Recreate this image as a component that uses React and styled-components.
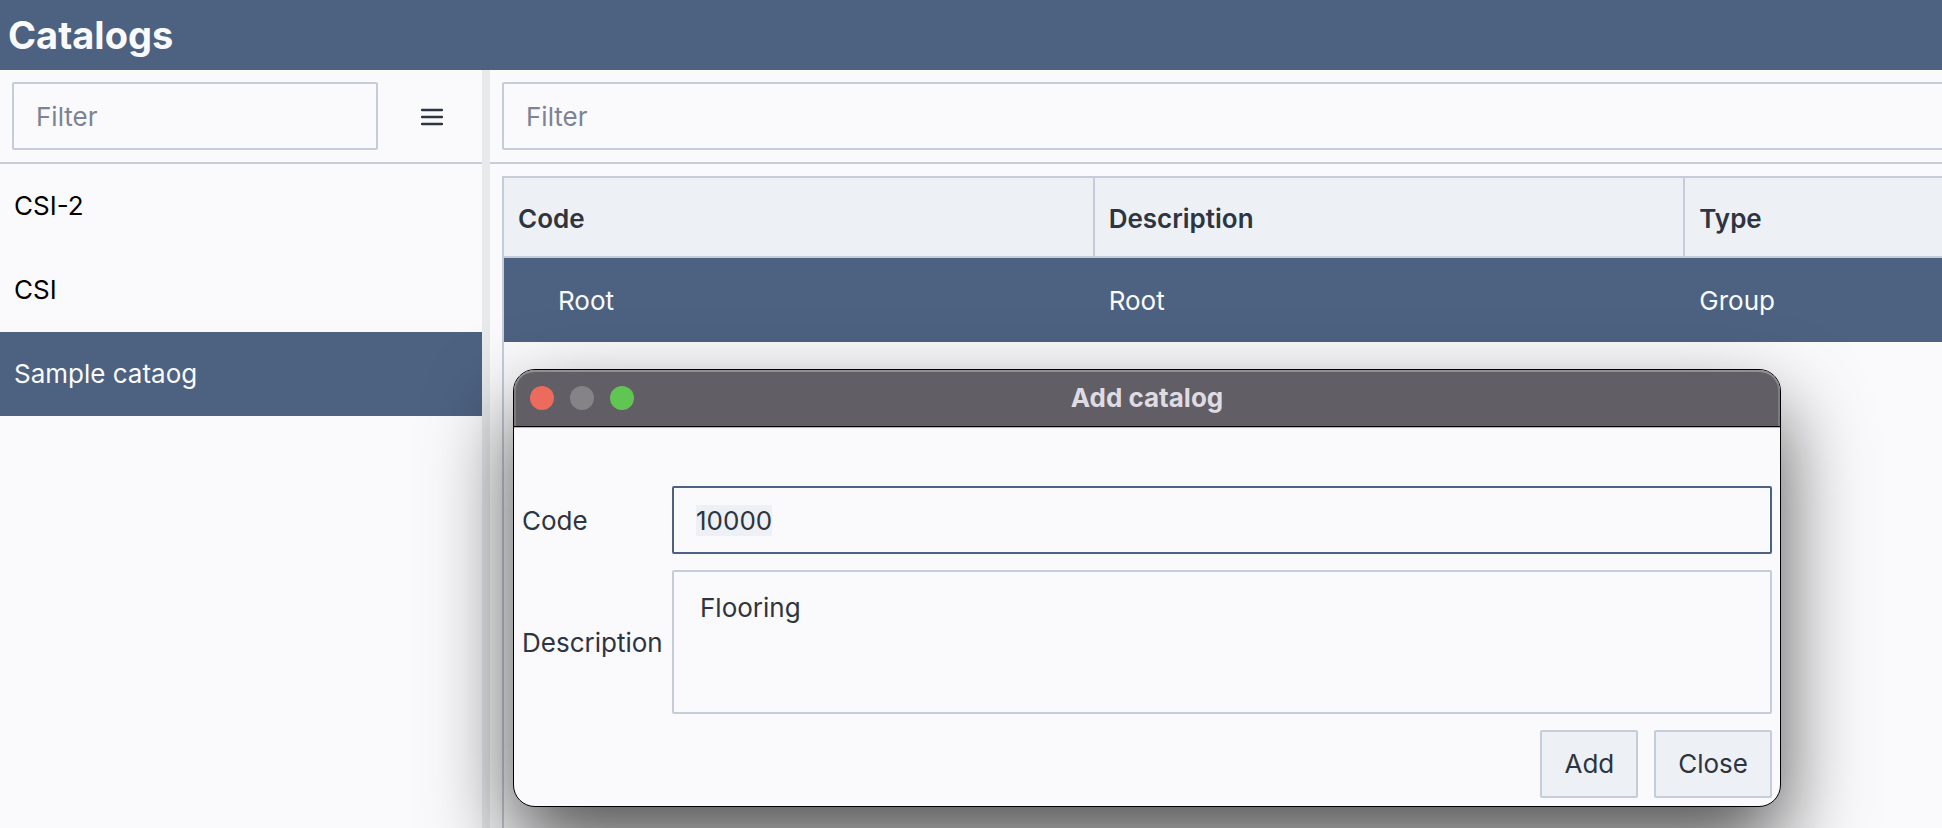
import { useEffect, useRef, useState } from "react"
import styled, { createGlobalStyle } from "styled-components"

const colors = {
  accent: '#4d6181',
  background: '#fafafc',
  subtle: '#edf0f5',
  border: '#c6ccda',
  text: '#2e3440',
  muted: '#7b8394',
}

const catalogs = ['CSI-2', 'CSI', 'Sample cataog']
const columns = ['Code', 'Description', 'Type']
const rows = [{ code: 'Root', description: 'Root', type: 'Group' }]

const AddCatalogDialog = () => {
  const codeRef = useRef(null)
  const [code, setCode] = useState('10000')
  const [description, setDescription] = useState('Flooring')

  useEffect(() => {
    codeRef.current.focus()
    codeRef.current.select()
  }, [])

  return (
    <Dialog role="dialog" aria-labelledby="dialog-title">
      <TitleBar>
        <WindowButton color="#ed6a5e" aria-label="Close window" />
        <WindowButton color="#858388" aria-label="Minimize window" disabled />
        <WindowButton color="#61c554" aria-label="Zoom window" />
        <DialogTitle id="dialog-title">Add catalog</DialogTitle>
      </TitleBar>
      <DialogForm onSubmit={(e) => e.preventDefault()}>
        <Label htmlFor="code">Code</Label>
        <CodeInput id="code" ref={codeRef} value={code} onChange={(e) => setCode(e.target.value)} />
        <Label htmlFor="description">Description</Label>
        <TextArea id="description" value={description} onChange={(e) => setDescription(e.target.value)} />
        <Actions>
          <Button type="submit">Add</Button>
          <Button type="button">Close</Button>
        </Actions>
      </DialogForm>
    </Dialog>
  )
}

const App = () => {
  const [selected, setSelected] = useState('Sample cataog')

  return (
    <>
      <GlobalStyle />
      <Page>
        <Header>
          <Title>Catalogs</Title>
        </Header>
        <Panes>
          <Sidebar>
            <Toolbar>
              <TextInput placeholder="Filter" aria-label="Filter catalogs" />
              <MenuButton aria-label="Menu">
                <svg width="22" height="20" viewBox="0 0 22 20" stroke="currentColor" strokeWidth="2.4" strokeLinecap="round">
                  <path d="M1 4h20M1 11h20M1 18h20" />
                </svg>
              </MenuButton>
            </Toolbar>
            <List>
              {catalogs.map((name) => (
                <li key={name}>
                  <ListButton $active={name === selected} onClick={() => setSelected(name)}>{name}</ListButton>
                </li>
              ))}
            </List>
          </Sidebar>
          <Splitter />
          <Content>
            <Toolbar>
              <TextInput placeholder="Filter" aria-label="Filter items" />
            </Toolbar>
            <TablePanel>
              <Table>
                <thead>
                  <tr>
                    {columns.map((column) => <HeadCell key={column}>{column}</HeadCell>)}
                  </tr>
                </thead>
                <tbody>
                  {rows.map((row) => (
                    <SelectedRow key={row.code}>
                      <Cell $tree>{row.code}</Cell>
                      <Cell>{row.description}</Cell>
                      <Cell>{row.type}</Cell>
                    </SelectedRow>
                  ))}
                </tbody>
              </Table>
            </TablePanel>
          </Content>
        </Panes>
        <AddCatalogDialog />
      </Page>
    </>
  )
}

const GlobalStyle = createGlobalStyle`
  * {
    box-sizing: border-box;
  }
  body {
    margin: 0;
    background: ${colors.background};
    color: ${colors.text};
    font-family: Inter, Roboto, sans-serif;
    font-size: 26px;
    line-height: 36px;
  }
  button, input, textarea {
    font: inherit;
    color: inherit;
  }
`
const Page = styled.div`
  position: relative;
  display: flex;
  flex-direction: column;
  min-height: 100vh;
  overflow: hidden;
`
const Header = styled.header`
  display: flex;
  align-items: center;
  height: 70px;
  padding: 0 8px;
  background: ${colors.accent};
`
const Title = styled.h1`
  margin: 0;
  color: ${colors.background};
  font-size: 38px;
  font-weight: 700;
`
const Panes = styled.div`
  display: flex;
  flex: 1;
`
const Sidebar = styled.aside`
  flex: 0 0 482px;
  min-width: 0;
`
const Splitter = styled.div`
  flex: 0 0 8px;
  background: #e8e9eb;
`
/* wider than its pane, the rest is cut off on the right */
const Content = styled.main`
  display: flex;
  flex-direction: column;
  flex: 1 0 1800px;
`
const Toolbar = styled.div`
  display: flex;
  gap: 16px;
  padding: 12px;
  border-bottom: 2px solid ${colors.border};
`
const TextInput = styled.input`
  flex: 1;
  min-width: 0;
  height: 68px;
  padding: 0 22px;
  border: 2px solid ${colors.border};
  border-radius: 2px;
  background: ${colors.background};
  outline: none;
  &::placeholder {
    color: ${colors.muted};
    opacity: 1;
  }
`
const MenuButton = styled.button`
  display: flex;
  align-items: center;
  justify-content: center;
  width: 76px;
  height: 68px;
  padding: 0;
  border: 0;
  background: none;
`
const List = styled.ul`
  margin: 0;
  padding: 0;
  list-style: none;
`
const ListButton = styled.button`
  display: block;
  width: 100%;
  height: 84px;
  padding: 0 14px;
  border: 0;
  text-align: left;
  background: ${props => props.$active ? colors.accent : 'none'};
  color: ${props => props.$active ? colors.background : '#000'};
`
const TablePanel = styled.div`
  flex: 1;
  margin: 12px 12px 0;
  border: 2px solid ${colors.border};
  border-bottom: 0;
`
const Table = styled.table`
  width: 100%;
  table-layout: fixed;
  border-collapse: separate;
  border-spacing: 0;
`
const HeadCell = styled.th`
  height: 80px;
  padding: 4px 14px 0;
  border-bottom: 2px solid ${colors.border};
  background: ${colors.subtle};
  font-weight: 600;
  text-align: left;
  &:not(:last-child) {
    border-right: 2px solid ${colors.border};
  }
`
const SelectedRow = styled.tr`
  background: ${colors.accent};
  color: ${colors.background};
`
const Cell = styled.td`
  height: 84px;
  padding: 2px 14px 0 ${props => props.$tree ? '54px' : '14px'};
`
const Dialog = styled.section`
  position: absolute;
  top: 369px;
  left: 513px;
  width: 1268px;
  border: 1px solid #000;
  border-radius: 22px;
  background: ${colors.background};
  box-shadow: 0 40px 84px rgba(0, 0, 0, 0.68);
`
const TitleBar = styled.div`
  display: flex;
  align-items: center;
  gap: 16px;
  height: 57px;
  padding: 0 16px;
  border-bottom: 1px solid #000;
  border-radius: 21px 21px 0 0;
  background: #615e65;
  box-shadow: inset 0 2px 0 #918f93, inset 2px 0 0 #7d7b80, inset -2px 0 0 #7d7b80, 0 1px 0 #b5b5b8;
`
const WindowButton = styled.button`
  width: 24px;
  height: 24px;
  padding: 0;
  border: 0;
  border-radius: 50%;
  background: ${props => props.color};
`
const DialogTitle = styled.h2`
  flex: 1;
  margin: 0 120px 0 0;
  color: #dedbe2;
  font-size: 26px;
  font-weight: 700;
  text-align: center;
`
const DialogForm = styled.form`
  display: grid;
  grid-template-columns: 134px 1fr;
  gap: 16px;
  align-items: center;
  padding: 59px 8px 8px;
`
const Label = styled.label`
  padding-top: 2px;
  white-space: nowrap;
`
const CodeInput = styled(TextInput)`
  border-color: ${colors.accent};
  &::selection {
    background: ${colors.subtle};
    color: ${colors.text};
  }
`
const TextArea = styled.textarea`
  display: block;
  height: 144px;
  padding: 18px 26px;
  border: 2px solid ${colors.border};
  border-radius: 2px;
  background: ${colors.background};
  outline: none;
  resize: none;
`
const Actions = styled.div`
  grid-column: 1 / -1;
  display: flex;
  justify-content: flex-end;
  gap: 16px;
`
const Button = styled.button`
  height: 68px;
  padding: 0 22px;
  border: 2px solid ${colors.border};
  border-radius: 2px;
  background: ${colors.subtle};
`
export default App
